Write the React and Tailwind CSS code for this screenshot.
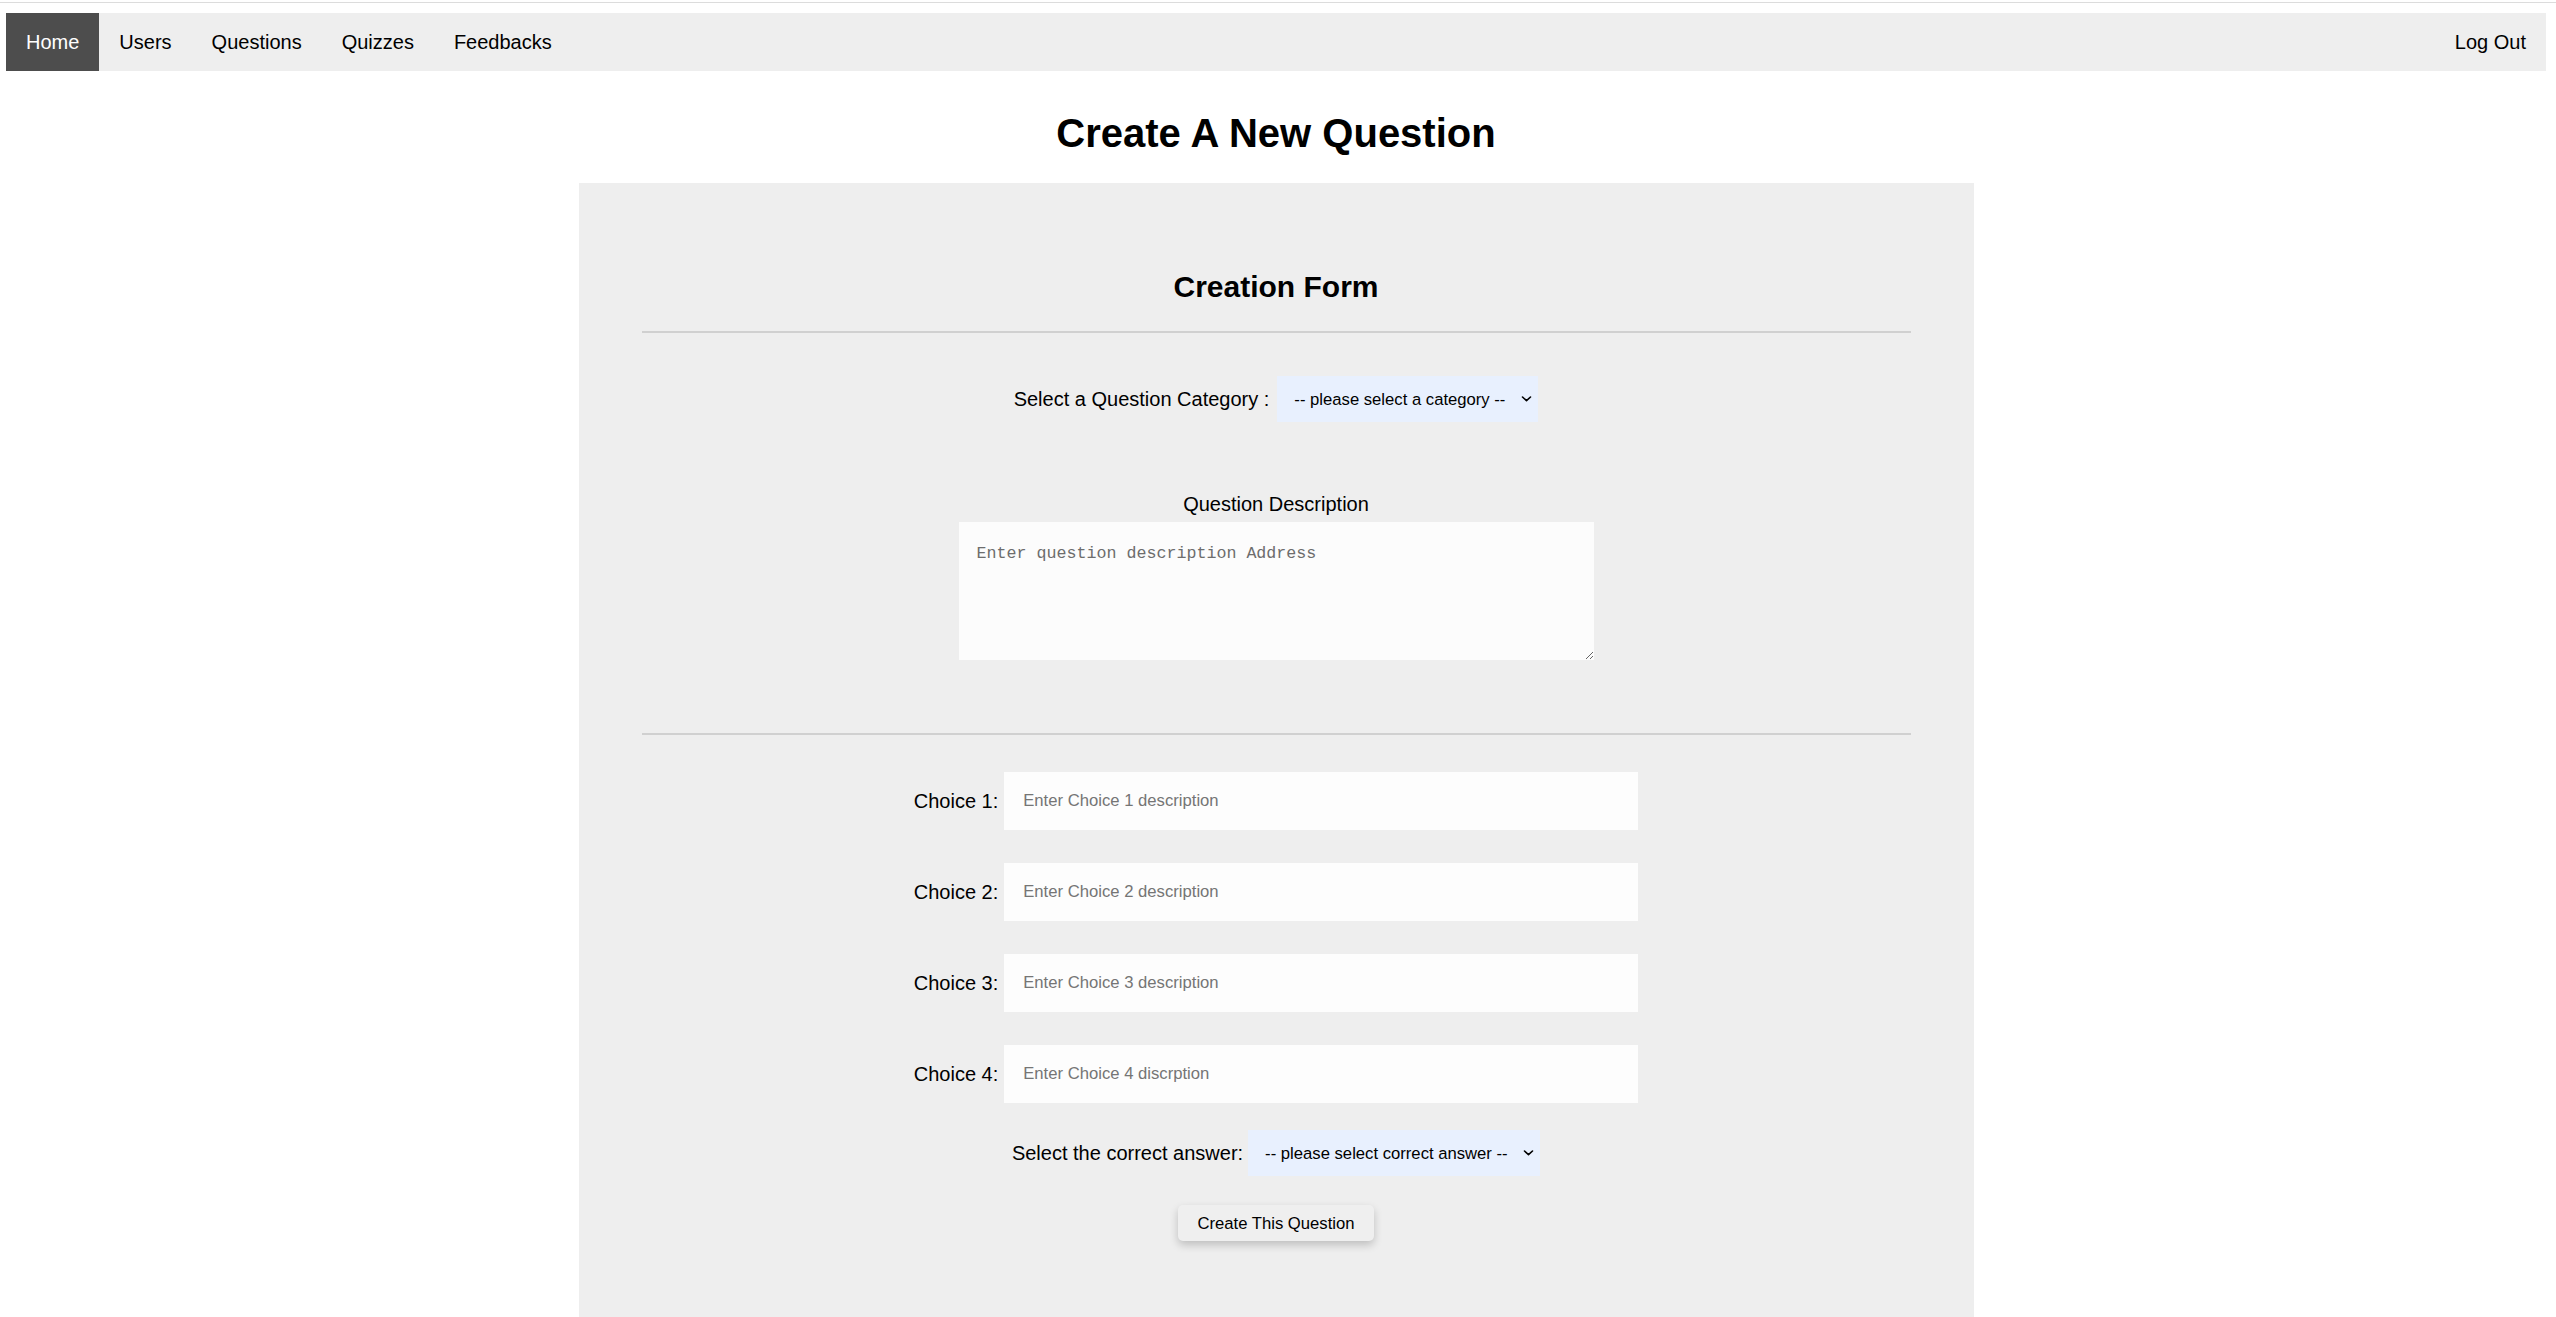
import React from 'react';

const NAV_ITEMS = ['Home', 'Users', 'Questions', 'Quizzes', 'Feedbacks'];

// ===== NAV BAR =====
const TopNav = () => {
  return (
    <nav className="mt-[10px] h-[58px] bg-[#eeeeee] flex text-[20px]">
      {NAV_ITEMS.map((item, i) => (
        <a
          key={item}
          href="#"
          className={`px-5 flex items-center ${i === 0 ? 'bg-[#4d4d4d] text-white' : 'text-black'}`}
        >
          {item}
        </a>
      ))}
      <a href="#" className="ml-auto px-5 flex items-center text-black">
        Log Out
      </a>
    </nav>
  );
};

// ===== SELECT WITH CHEVRON =====
const FakeSelect = ({ label, width }) => {
  return (
    <div className={`relative h-[46px] ${width}`}>
      <select className="appearance-none w-full h-full bg-[#e8f0fe] pl-[17px] pr-[30px] text-[16.67px] text-black outline-none border-0">
        <option>{label}</option>
      </select>
      <svg
        className="absolute right-[6px] top-1/2 -translate-y-1/2 pointer-events-none"
        width="11"
        height="7"
        viewBox="0 0 11 7"
        fill="none"
      >
        <path d="M1.5 1.5 L5.5 5.2 L9.5 1.5" stroke="#000" strokeWidth="1.6" strokeLinecap="round" strokeLinejoin="round" />
      </svg>
    </div>
  );
};

// ===== CHOICE ROW =====
const ChoiceRow = ({ n, placeholder }) => {
  return (
    <div className="flex items-center justify-center gap-[6px]">
      <label className="text-[20px]">Choice {n}:</label>
      <input
        type="text"
        placeholder={placeholder}
        className="w-[634px] h-[58px] bg-[#fdfdfd] pl-[19px] text-[16.67px] outline-none border-0 placeholder:text-[#757575]"
      />
    </div>
  );
};

export default function App() {
  return (
    <div className="min-h-screen bg-white text-black font-['Liberation_Sans',Arial,sans-serif]">
      {/* thin top rule */}
      <div className="mt-[2px] h-px bg-[#dcdcdc]" />

      <div className="ml-[6px] mr-[10px]">
        <TopNav />

        <h1 className="mt-[39px] mb-[27px] text-center text-[40px] leading-[46px] font-bold">
          Create A New Question
        </h1>

        {/* Form panel */}
        <div className="mx-auto w-[1395px] bg-[#eeeeee] px-[63px] pt-[87px] pb-[90px]">
          <h2 className="text-center text-[30px] leading-[34px] font-bold">Creation Form</h2>
          <div className="mt-[27px] h-[2px] bg-[#d0d0d0]" />

          {/* Category */}
          <div className="mt-[43px] flex items-center justify-center gap-[8px]">
            <label className="text-[20px]">Select a Question Category :</label>
            <FakeSelect label="-- please select a category --" width="w-[261px]" />
          </div>

          {/* Description */}
          <div className="mt-[71px] flex flex-col items-center">
            <label className="text-[20px] leading-[23px]">Question Description</label>
            <textarea
              placeholder="Enter question description Address"
              className="mt-[6px] w-[635px] h-[138px] bg-[#fcfcfc] pl-[18px] pr-[18px] pt-[19px] text-[16.67px] font-['Liberation_Mono','Courier_New',monospace] outline-none border-0 placeholder:text-[#6d6d6d]"
            />
          </div>

          <div className="mt-[73px] h-[2px] bg-[#d0d0d0]" />

          {/* Choices */}
          <div className="mt-[37px] flex flex-col gap-[33px]">
            <ChoiceRow n={1} placeholder="Enter Choice 1 description" />
            <ChoiceRow n={2} placeholder="Enter Choice 2 description" />
            <ChoiceRow n={3} placeholder="Enter Choice 3 description" />
            <ChoiceRow n={4} placeholder="Enter Choice 4 discrption" />
          </div>

          {/* Correct answer */}
          <div className="mt-[27px] flex items-center justify-center gap-[5px]">
            <label className="text-[20px]">Select the correct answer:</label>
            <FakeSelect label="-- please select correct answer --" width="w-[292px]" />
          </div>

          <div className="mt-[29px] flex justify-center">
            <button className="h-[36px] px-[19px] bg-[#efefef] rounded-[5px] text-[16.67px] text-black shadow-[0_4px_8px_rgba(0,0,0,0.2)]">
              Create This Question
            </button>
          </div>
        </div>
      </div>
    </div>
  );
}
